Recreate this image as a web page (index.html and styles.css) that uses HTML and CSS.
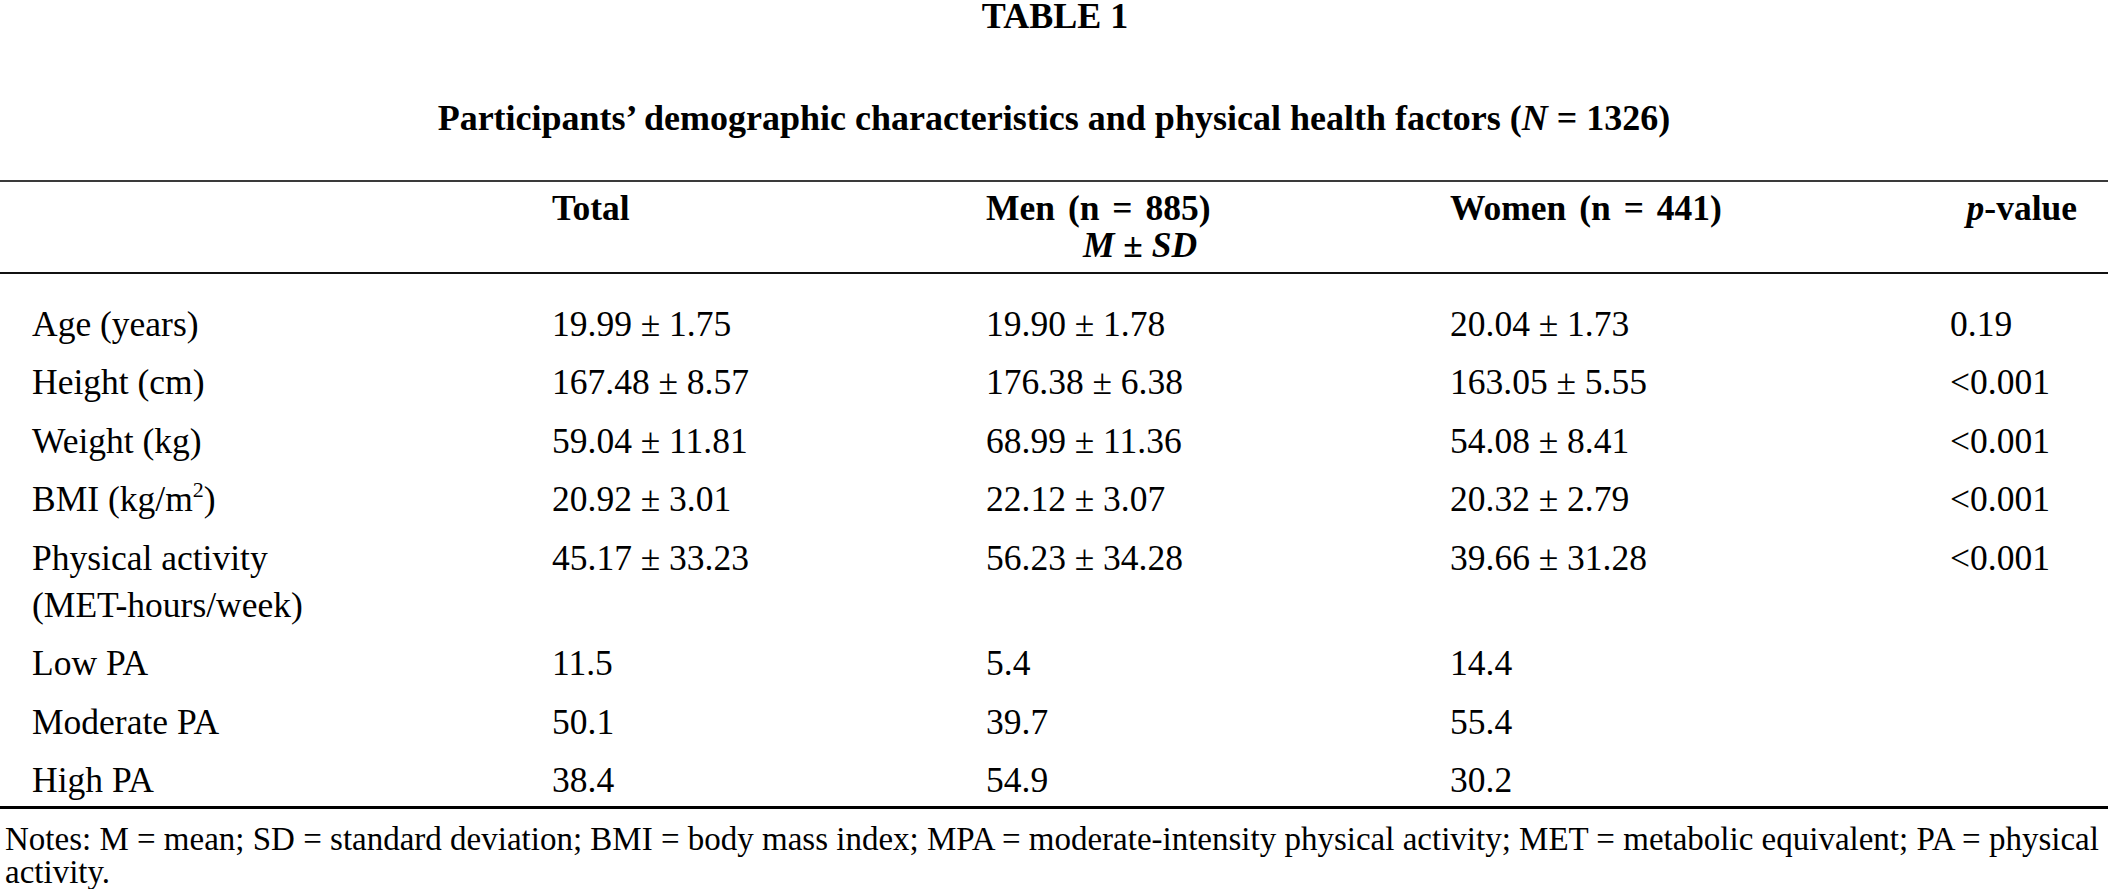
FILE: index.html
```html
<!DOCTYPE html>
<html lang="en">
<head>
<meta charset="utf-8">
<title>Table 1</title>
<link rel="stylesheet" href="styles.css">
</head>
<body>
<div class="page">
  <div class="label">TABLE 1</div>
  <div class="caption">Participants’ demographic characteristics and physical health factors (<i>N</i> = 1326)</div>
  <table class="data">
    <colgroup>
      <col class="c-label">
      <col class="c-total">
      <col class="c-men">
      <col class="c-women">
      <col class="c-p">
    </colgroup>
    <thead>
      <tr class="h1">
        <th></th>
        <th>Total</th>
        <th>Men (n = 885)</th>
        <th>Women (n = 441)</th>
        <th class="pv"><i>p</i>-value</th>
      </tr>
      <tr class="h2">
        <th></th>
        <th colspan="3" class="msd"><i>M</i> ± <i>SD</i></th>
        <th></th>
      </tr>
    </thead>
    <tbody>
      <tr class="first"><td>Age (years)</td><td>19.99 ± 1.75</td><td>19.90 ± 1.78</td><td>20.04 ± 1.73</td><td>0.19</td></tr>
      <tr><td>Height (cm)</td><td>167.48 ± 8.57</td><td>176.38 ± 6.38</td><td>163.05 ± 5.55</td><td>&lt;0.001</td></tr>
      <tr><td>Weight (kg)</td><td>59.04 ± 11.81</td><td>68.99 ± 11.36</td><td>54.08 ± 8.41</td><td>&lt;0.001</td></tr>
      <tr><td>BMI (kg/m<sup>2</sup>)</td><td>20.92 ± 3.01</td><td>22.12 ± 3.07</td><td>20.32 ± 2.79</td><td>&lt;0.001</td></tr>
      <tr><td>Physical activity<br>(MET-hours/week)</td><td>45.17 ± 33.23</td><td>56.23 ± 34.28</td><td>39.66 ± 31.28</td><td>&lt;0.001</td></tr>
      <tr><td>Low PA</td><td>11.5</td><td>5.4</td><td>14.4</td><td></td></tr>
      <tr><td>Moderate PA</td><td>50.1</td><td>39.7</td><td>55.4</td><td></td></tr>
      <tr class="last"><td>High PA</td><td>38.4</td><td>54.9</td><td>30.2</td><td></td></tr>
    </tbody>
  </table>
  <div class="notes">Notes: M = mean; SD = standard deviation; BMI = body mass index; MPA = moderate-intensity physical activity; MET = metabolic equivalent; PA = physical activity.</div>
</div>
</body>
</html>
```

FILE: styles.css
```css
html, body {
  margin: 0;
  padding: 0;
  background: #ffffff;
}

body {
  color: #000000;
  font-family: "Liberation Serif", "Times New Roman", serif;
}

.page {
  width: 2108px;
}

.label {
  text-align: center;
  font-weight: bold;
  font-size: 36px;
  line-height: 32px;
  padding-left: 2px;
}

.caption {
  margin-top: 66px;
  text-align: center;
  font-weight: bold;
  font-size: 36px;
  line-height: 40px;
}

.data {
  margin-top: 42px;
  width: 2108px;
  table-layout: fixed;
  border-collapse: separate;
  border-spacing: 0;
  font-size: 35.5px;
}

.c-label { width: 552px; }
.c-total { width: 434px; }
.c-men { width: 464px; }
.c-women { width: 500px; }
.c-p { width: 158px; }

.data th,
.data td {
  padding: 0;
  text-align: left;
  vertical-align: top;
  white-space: nowrap;
}

.data th {
  font-weight: bold;
  line-height: 37px;
  word-spacing: 4px;
}

.h1 th {
  border-top: 2px solid #3a3a3a;
  padding-top: 7.5px;
}

.h2 th {
  border-bottom: 2px solid #111111;
  padding-bottom: 8px;
}

.data th.pv {
  text-align: right;
  padding-right: 31px;
}

.data th.msd {
  text-align: center;
  padding-right: 222px;
  word-spacing: 0;
}

.data td {
  line-height: 47px;
  padding-top: 6px;
  padding-bottom: 5.5px;
}

.data td:first-child {
  padding-left: 32px;
}

.data tr.first td {
  padding-top: 27px;
}

.data tr.last td {
  padding-bottom: 1.5px;
  border-bottom: 3px solid #000000;
}

.data sup {
  font-size: 22px;
  line-height: 0;
  vertical-align: 14px;
}

.notes {
  margin-top: 14.5px;
  padding-left: 5px;
  font-size: 33px;
  line-height: 33px;
}
```
